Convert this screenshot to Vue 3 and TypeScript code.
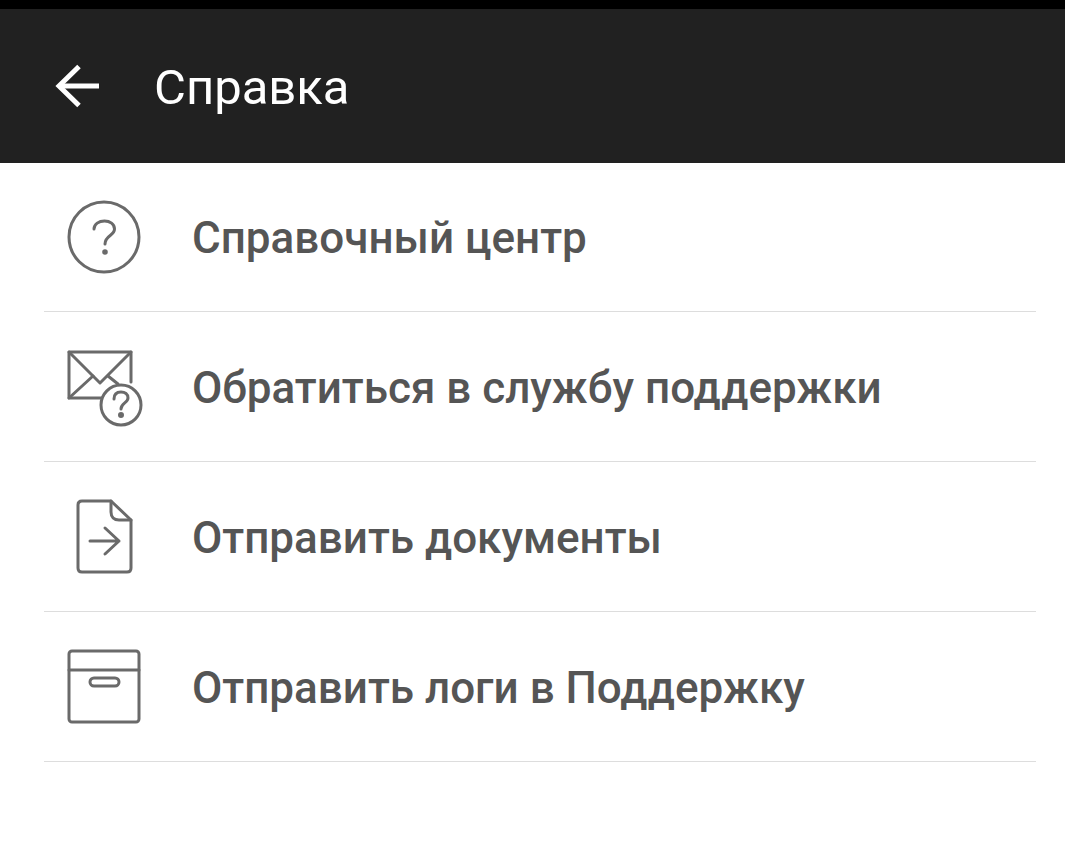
<script setup lang="ts">
const items = [
  { key: 'help', label: 'Справочный центр' },
  { key: 'mail', label: 'Обратиться в службу поддержки' },
  { key: 'doc', label: 'Отправить документы' },
  { key: 'box', label: 'Отправить логи в Поддержку' },
];
</script>

<template>
  <div class="screen">
    <div class="status"></div>
    <header class="toolbar">
      <svg class="back" width="48" height="48" viewBox="0 0 48 48" fill="none" stroke="#fff" stroke-width="5">
        <path d="M5 24H45" />
        <path d="M25 4.500L5 24L25 43.500" />
      </svg>
      <h1 class="title">Справка</h1>
    </header>
    <ul class="list">
      <li v-for="item in items" :key="item.key" class="row">
        <svg class="icon" width="80" height="80" viewBox="0 0 80 80" fill="none" stroke="#6a6a6a" stroke-width="3" stroke-linecap="round" stroke-linejoin="round">
          <template v-if="item.key === 'help'">
            <circle cx="40" cy="39" r="35" />
            <path d="M30 31C30 26 35 23 40.500 23C46 23 50.500 26 50.500 31C50.500 38 41 37 41 46" />
            <circle cx="41" cy="54" r="1.300" fill="#6a6a6a" />
          </template>
          <template v-else-if="item.key === 'mail'">
            <path d="M37 50H5V4H67V34" />
            <path d="M5 4L36 35L67 4" />
            <path d="M5 50L29 28M44 28L54 36" />
            <circle cx="57" cy="57" r="20" fill="#fff" />
            <path d="M50 51C50 46 53 44 57 44C61 44 64 46 64 50C64 55 57 55 57 61" />
            <circle cx="57" cy="67" r="1.500" fill="#6a6a6a" />
          </template>
          <template v-else-if="item.key === 'doc'">
            <path d="M47 3H18C15.500 3 14 4.500 14 7V70C14 72.500 15.500 74 18 74H63C65.500 74 67 72.500 67 70V22Z" />
            <path d="M47 3V14C47 19 50 22 55 22H67" />
            <path d="M26 43H55M41 30L55 43L41 56" />
          </template>
          <template v-else>
            <rect x="5" y="3" width="70" height="71" rx="3" />
            <path d="M5 22H75" />
            <rect x="26" y="30" width="29" height="8" rx="4" />
          </template>
        </svg>
        <span class="label">{{ item.label }}</span>
      </li>
    </ul>
  </div>
</template>

<style>
body {
  background: #fff;
}
</style>

<style scoped>
.screen {
  width: 1065px;
  height: 850px;
  background: #fff;
  font-family: Roboto, "Noto Sans", sans-serif;
  overflow: hidden;
}

.status {
  height: 9px;
  background: #000;
}

.toolbar {
  height: 154px;
  background: #212121;
  display: flex;
  align-items: center;
  padding-left: 54px;
}

.back {
  margin-right: 52px;
}

.title {
  margin: 2px 0 0;
  font-size: 49px;
  font-weight: 400;
  color: #fff;
}

.list {
  list-style: none;
  margin: 0 29px 0 44px;
  padding: 0;
}

.row {
  box-sizing: border-box;
  height: 150px;
  display: flex;
  align-items: center;
  padding: 2px 0 0 20px;
  border-bottom: 1px solid #ddd;
}

.row:first-child {
  height: 149px;
  padding-top: 1px;
}

.icon {
  flex: none;
  margin-right: 48px;
}

.label {
  font-size: 44px;
  font-weight: 500;
  color: #555;
}
</style>
